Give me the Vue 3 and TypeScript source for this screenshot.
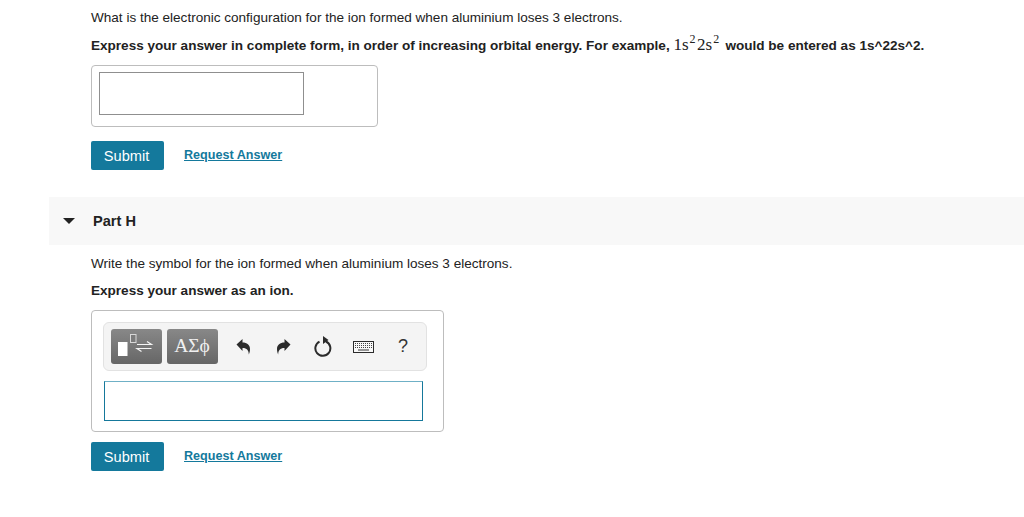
<script setup lang="ts">
const tools = ['undo', 'redo', 'reset', 'keyboard', 'help']
</script>

<template>
  <div class="page">
    <section class="part-body first">
      <p class="question">What is the electronic configuration for the ion formed when aluminium loses 3 electrons.</p>
      <p class="hint">
        Express your answer in complete form, in order of increasing orbital energy. For example,
        <span class="math">1s<sup>2</sup>2s<sup>2</sup></span>
        would be entered as 1s^22s^2.
      </p>
      <div class="answer-box small">
        <div class="plain-input"></div>
      </div>
      <div class="actions">
        <button class="submit">Submit</button>
        <a class="request" href="#">Request Answer</a>
      </div>
    </section>

    <div class="part-header">
      <span class="caret"></span>
      <span class="part-title">Part H</span>
    </div>

    <section class="part-body second">
      <p class="question">Write the symbol for the ion formed when aluminium loses 3 electrons.</p>
      <p class="hint">Express your answer as an ion.</p>
      <div class="answer-box large">
        <div class="toolbar">
          <button class="tpl-btn templates" aria-label="Templates">
            <svg width="51" height="35" viewBox="0 0 51 35">
              <rect x="7" y="13" width="9.500" height="14" fill="#fff" />
              <rect x="19.500" y="5.500" width="5.500" height="8" fill="#7b7b7b" stroke="#d8d8d8" />
              <path d="M26 15.500h14.500l-4.500-3M40.500 19.500H26l4.500 3" fill="none" stroke="#f4f4f4" stroke-width="1.200" />
            </svg>
          </button>
          <button class="tpl-btn symbols">ΑΣϕ</button>
          <div class="tools">
            <span v-for="t in tools" :key="t" class="tool">
              <svg v-if="t === 'undo'" width="15" height="17" viewBox="0 0 15 17">
                <path d="M.5 6.500 6.500 1v3.500c4.500 0 7.500 2.500 7.500 6.500 0 2.200-.5 4-1.200 5.500C12.800 12.500 11 10 6.500 10v3z" fill="#2b2b2b" />
              </svg>
              <svg v-else-if="t === 'redo'" width="15" height="17" viewBox="0 0 15 17">
                <path d="M14.500 6.500 8.500 1v3.500C4 4.500 1 7 1 11c0 2.200.5 4 1.200 5.500C2.200 12.500 4 10 8.500 10v3z" fill="#2b2b2b" />
              </svg>
              <svg v-else-if="t === 'reset'" width="18" height="21" viewBox="0 0 18 21">
                <path d="M5.500 5.600a7.500 7.500 0 1 0 6.500-.1" fill="none" stroke="#2b2b2b" stroke-width="2" />
                <path d="M9 0v8l5.500-4z" fill="#2b2b2b" />
              </svg>
              <svg v-else-if="t === 'keyboard'" width="21" height="12" viewBox="0 0 21 12">
                <rect x=".5" y=".5" width="20" height="11" fill="#f8f8f8" stroke="#2b2b2b" />
                <path d="M2 2.500h17M2 4.500h17M2 6.500h17" stroke="#444" stroke-dasharray="1 1" />
                <path d="M5 9h11" stroke="#333" />
              </svg>
              <span v-else class="help">?</span>
            </span>
          </div>
        </div>
        <div class="math-input"></div>
      </div>
      <div class="actions">
        <button class="submit">Submit</button>
        <a class="request" href="#">Request Answer</a>
      </div>
    </section>
  </div>
</template>

<style>
html, body {
  margin: 0;
  background: #fff;
}
</style>

<style scoped>
.page {
  height: 517px;
  overflow: hidden;
  padding-left: 49px;
  font-family: "Liberation Sans", Arial, sans-serif;
  font-size: 13.55px;
  color: #222;
}
.part-body {
  padding-left: 42px;
}
.first {
  padding-top: 10px;
}
.second {
  padding-top: 11px;
}
p {
  margin: 0;
  line-height: 16px;
}
.hint {
  margin-top: 10px;
  font-weight: 700;
  line-height: 18px;
}
.second .hint {
  margin-top: 11px;
  line-height: 16px;
}
.math {
  font-family: "Liberation Serif", serif;
  font-size: 17px;
  font-weight: 400;
  margin-right: 1px;
}
.math sup {
  font-size: 12px;
  line-height: 0;
  margin: 0 1.5px 0 1px;
}
.answer-box {
  box-sizing: border-box;
  border: 1px solid #bdbdbd;
  border-radius: 4px;
  background: #fff;
}
.small {
  width: 287px;
  height: 62px;
  margin-top: 10px;
  padding: 6px 7px;
}
.plain-input {
  box-sizing: border-box;
  width: 205px;
  height: 43px;
  border: 1px solid #8f8f8f;
}
.large {
  width: 353px;
  height: 122px;
  margin-top: 11px;
  padding: 11px;
}
.toolbar {
  box-sizing: border-box;
  width: 324px;
  height: 49px;
  display: flex;
  align-items: center;
  gap: 5px;
  padding: 0 7px;
  background: #f4f4f4;
  border: 1px solid #e2e2e2;
  border-radius: 6px;
}
.tpl-btn {
  flex-shrink: 0;
  width: 51px;
  height: 35px;
  padding: 0;
  border: 0;
  border-radius: 3px;
  background: linear-gradient(#888, #666);
  color: #f0f0f0;
  display: flex;
  align-items: center;
  justify-content: center;
  font-family: "Liberation Serif", serif;
  font-size: 19.5px;
}
.symbols {
  padding: 0 1px 2px 0;
}
.tools {
  display: flex;
  align-items: center;
}
.tool {
  width: 40px;
  display: flex;
  justify-content: center;
}
.help {
  font-size: 18px;
  color: #333;
}
.math-input {
  box-sizing: border-box;
  width: 319px;
  height: 40px;
  margin: 10px 0 0 1px;
  border: 1px solid #15789b;
  border-top-color: #6fb0c6;
}
.actions {
  display: flex;
  align-items: center;
  gap: 20px;
  margin-top: 14px;
}
.second .actions {
  margin-top: 10px;
}
.submit {
  width: 73px;
  height: 29px;
  padding: 0 2px 0 0;
  border: 0;
  border-radius: 2px;
  background: #14799c;
  color: #fff;
  font-family: inherit;
  font-size: 14.6px;
}
.request {
  margin-top: -2px;
  color: #14799c;
  font-size: 12.6px;
  font-weight: 700;
  text-decoration: underline;
}
.part-header {
  display: flex;
  align-items: center;
  height: 48px;
  margin-top: 27px;
  background: #f8f8f8;
}
.caret {
  width: 0;
  height: 0;
  margin-left: 14px;
  border-left: 6px solid transparent;
  border-right: 6px solid transparent;
  border-top: 6px solid #222;
}
.part-title {
  margin-left: 18px;
  font-size: 14.6px;
  font-weight: 700;
}
</style>
